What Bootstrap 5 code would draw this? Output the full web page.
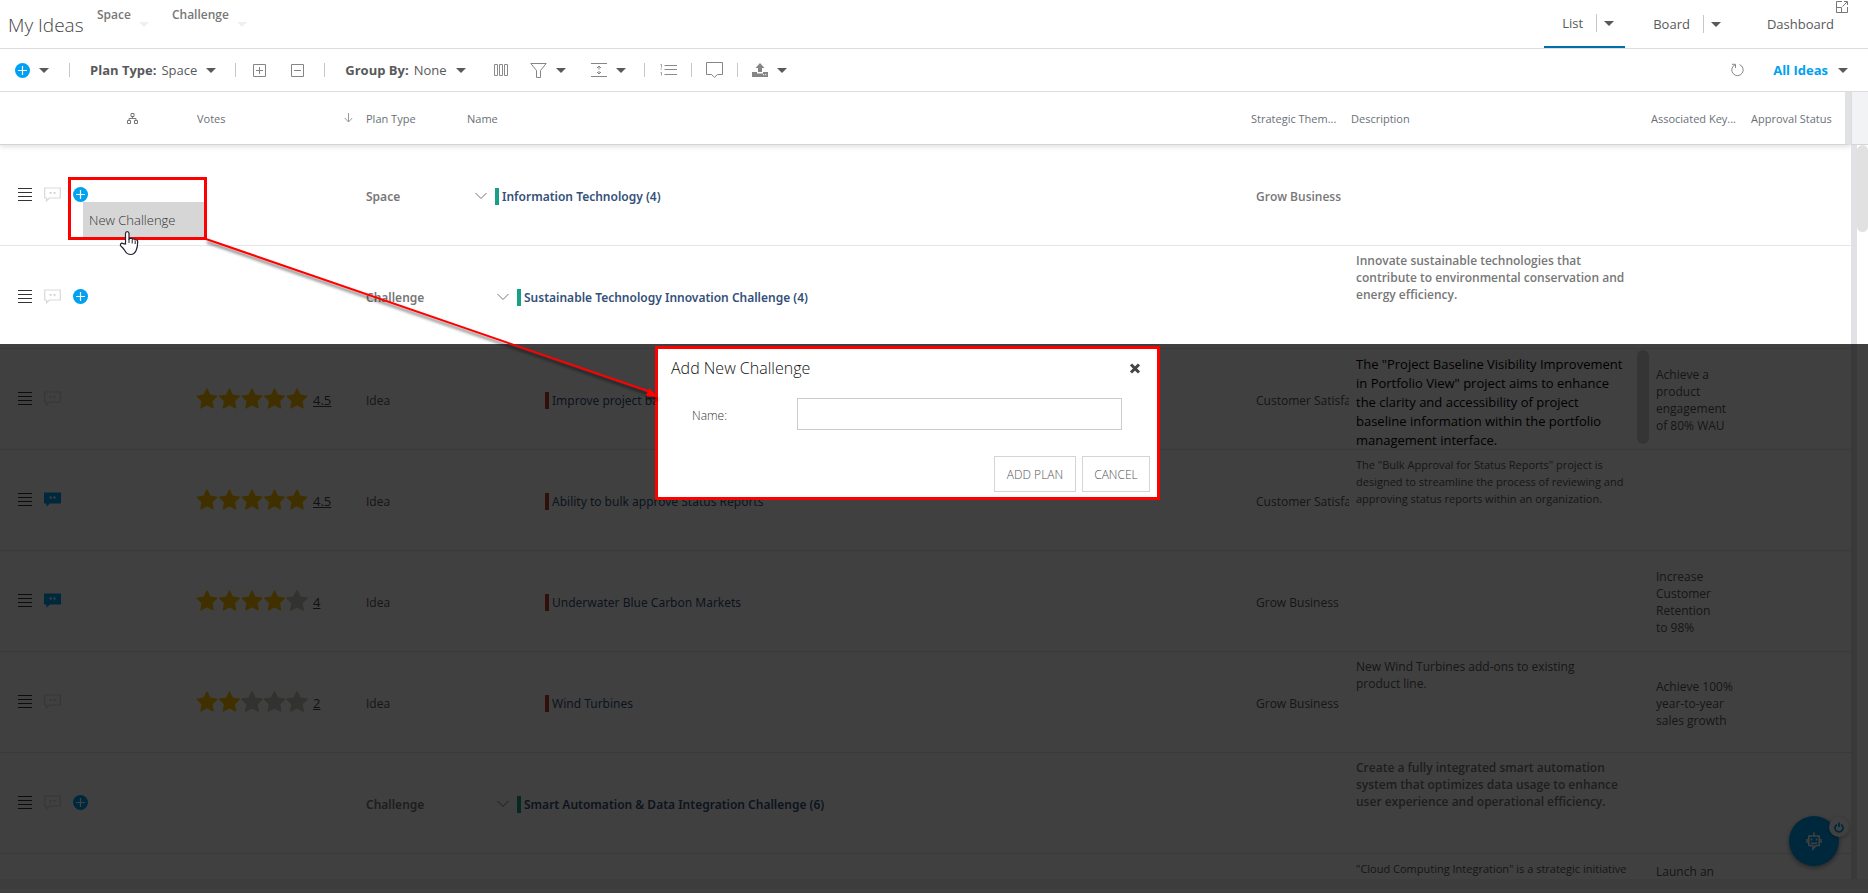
<!DOCTYPE html>
<html lang="en">
<head>
<meta charset="utf-8">
<meta name="viewport" content="width=device-width, initial-scale=1">
<title>My Ideas</title>
<link href="https://cdn.jsdelivr.net/npm/bootstrap@5.3.0/dist/css/bootstrap.min.css" rel="stylesheet">
<style>
  :root { --ui-font: "Open Sans", "Noto Sans", sans-serif; --grid-font: "Noto Sans", "Open Sans", sans-serif; --blue: #00a1f1; --ink: #58595b; --soft: #777; --line: #dcdde0; }
  body { font-family: var(--ui-font); font-size: 12px; line-height: 17px; color: var(--ink); background: #fff; }
  a { color: inherit; text-decoration: none; }
  svg { display: block; flex: none; }
  .page { height: 100vh; overflow: hidden; }
  .btn-plain { border: 0; background: none; padding: 0; color: inherit; display: flex; align-items: center; gap: 9px; white-space: nowrap; }
  .caret { width: 0; height: 0; border: 5px solid transparent; border-top-color: #58595b; border-bottom: 0; flex: none; }
  .caret-soft { border-top-color: #eeeff0; }
  .rule-v { width: 1px; height: 14px; background: #c8c8c8; flex: none; }

  .topbar { height: 49px; border-bottom: 1px solid var(--line); }
  .topbar h1 { font-size: 19px; line-height: 24px; font-weight: 300; margin: 0; padding: 13px 0 0 8px; color: #444; width: 97px; white-space: nowrap; }
  .level { font-weight: 600; color: var(--soft); padding: 6px 23px 0 0; align-items: flex-start; height: 28px; gap: 8px; }
  .level .caret { margin-top: 16px; }
  .tab-item { font-size: 13px; height: 48px; gap: 7px; }
  .tab-item .rule-v { height: 18px; margin-left: 6px; }
  .tab-list { padding: 0 11px 0 18px; border-bottom: 2px solid #0070ad; }
  .tab-board { padding: 0 0 0 28px; }
  .tab-dash { padding: 0 2px 0 46px; }
  .expand { margin: 1px 20px 0 0; }

  .toolbar-row { height: 43px; padding: 0 20px 0 15px; border-bottom: 1px solid var(--line); font-size: 13px; }
  .toolbar-row b { font-weight: 700; margin-right: -4px; }
  .toolbar-row .rule-v { margin: 0 14px; }
  .toolbar-row .rule-wide { margin: 0 17px 0 19px; }
  .toolbar-row .rule-first { margin: 0 20px; }
  .toolbar-row .rule-list { margin: 0 15px 0 18px; }
  .toolbar-row .m-icon { margin-left: 25px; }
  .toolbar-row .m-wide { margin-left: 28px; }
  .toolbar-row .m-tight { margin-left: 22px; }
  .toolbar-row .saved-view { color: var(--blue); margin-left: 29px; gap: 10px; }
  .saved-view b.view-name { margin: 0; }

  .grid-wrap { flex: 1 1 0; min-height: 0; }
  .idea-grid { width: 100%; table-layout: fixed; border-collapse: separate; border-spacing: 0; }
  .c-tools { width: 117px; } .c-tree { width: 78px; } .c-votes { width: 169px; } .c-type { width: 101px; } .c-theme, .c-key { width: 100px; } .c-desc { width: 300px; } .c-status { width: 102px; }
  .idea-grid th { height: 53px; padding: 0 0 0 2px; font-size: 11px; font-weight: 400; color: #6a7078; border-bottom: 1px solid #d4d5d8; vertical-align: middle; white-space: nowrap; overflow: hidden; }
  .idea-grid th:nth-child(2) { padding-left: 10px; }
  .idea-grid th:nth-child(3) svg { margin-right: 11px; }
  .idea-grid thead { box-shadow: 0 2px 5px rgba(0,0,0,.12); }
  .idea-grid th:last-child { border-right: 6px solid #e1e2e4; }
  .idea-grid td { height: 101px; padding: 2px 0 0 7px; border-bottom: 1px solid #e6e7e9; vertical-align: middle; overflow: hidden; color: var(--ink); }
  .idea-grid td:nth-child(3), .idea-grid td:nth-child(4) { padding-left: 2px; }
  .idea-grid td:first-child { padding: 0 0 2px 18px; }
  .idea-grid td:nth-child(7) { vertical-align: top; padding: 6px 8px 0 7px; }
  .idea-grid td:nth-child(8) { padding-right: 10px; }
  .idea-grid .tall-row td { height: 103px; }
  .idea-grid .tall-row td:nth-child(-n+5) { padding-bottom: 2px; }
  .idea-grid .level-row td { font-weight: 600; color: var(--soft); }
  .idea-grid .level-row td:nth-child(4), .idea-grid .level-row td:nth-child(5) { font-family: var(--grid-font); }
  .row-tools { display: flex; align-items: center; gap: 12px; }
  .plan-link { display: flex; align-items: center; white-space: nowrap; font-family: var(--grid-font); }
  .plan-link a { color: #34507a; }
  .stripe { width: 4px; height: 17px; background: #16a085; margin: 0 3px 0 8px; flex: none; }
  .stripe-red { background: #c0392b; margin: 0 3px 0 0; }
  .in-1 { padding-left: 3px; } .in-2 { padding-left: 25px; } .in-3 { padding-left: 73px; }
  .votes { display: flex; align-items: center; }
  .votes svg { margin: 0 0 3px -1px; }
  .votes a { text-decoration: underline; margin-left: 5px; font-size: 13px; color: #444; }
  .idea-grid td.desc-small { font-size: 11px; }
  .rich-text { font-size: 13px; line-height: 19px; color: #000; margin-right: -8px; display: flex; justify-content: space-between; height: 94px; }
  .rich-text .thumb { width: 12px; flex: none; border-radius: 6px; background: #d2d2d2; margin: -5px 0 5px; }
  .rich-text p { margin: 0; width: 276px; }
  .idea-grid td.key-top { vertical-align: top; padding-top: 9px; }

  .side { width: 17px; flex: none; }
  .side-head { height: 53px; background: #f2f3f5; border-left: 1px solid var(--line); border-bottom: 1px solid #d4d5d8; }
  .side-body { border-left: 6px solid #e1e2e6; }
  .side-body .thumb { height: 87px; border-radius: 6px; background: #e1e1e1; }
  .bottom-scroll { height: 14px; border-bottom: 4px solid #fff; background: #f1f1f1; flex: none; }

  .shade { position: absolute; inset: 344px 0 0 0; background: rgba(0,0,0,.75); }
  .assist { position: absolute; right: 29px; bottom: 27px; width: 50px; height: 50px; border-radius: 50%; background: var(--blue); border: 0; padding: 0; display: flex; align-items: center; justify-content: center; box-shadow: 0 2px 5px rgba(0,0,0,.4); }
  .assist .power { position: absolute; right: -10px; top: 1px; width: 20px; height: 20px; border-radius: 50%; background: #fff; display: flex; align-items: center; justify-content: center; box-shadow: 0 1px 4px rgba(0,0,0,.35); }

  .callout { position: absolute; left: 68px; top: 177px; width: 139px; height: 63px; border: 3px solid #f00; padding: 22px 0 0 12px; }
  .callout button { width: 100%; height: 35px; background: #d6d6d6; border: 0; text-align: left; padding: 2px 0 0 6px; font-size: 13px; font-weight: 300; color: #333; }
  .marks { position: absolute; left: 0; top: 0; pointer-events: none; }

  .dialog-box { position: absolute; left: 655px; top: 346px; width: 505px; height: 154px; border: 3px solid #f00; background: #fff; padding: 7px 7px 5px 13px; }
  .dialog-head { padding-right: 9px; }
  .dialog-box h2 { font-size: 16px; line-height: 24px; font-weight: 300; margin: 0; color: #111; }
  .dialog-field { margin: 18px 0 26px 21px; }
  .dialog-box label { width: 105px; padding-top: 2px; font-size: 12px; font-weight: 300; color: #333; }
  .dialog-box input { width: 325px; height: 32px; border: 1px solid #ccc; border-radius: 0; padding: 4px 8px; }
  .dialog-foot { gap: 6px; }
  .btn-flat { border: 1px solid #d4d4d4; background: #fff; width: 82px; height: 36px; padding: 0; font-size: 12px; font-weight: 300; color: #555; }
  .btn-cancel { width: 68px; }
</style>
<script src="https://cdn.jsdelivr.net/npm/bootstrap@5.3.0/dist/js/bootstrap.bundle.min.js"></script>
</head>
<body>
<svg width="0" height="0" class="position-absolute">
  <symbol id="plus" viewBox="0 0 15 15"><circle cx="7.500" cy="7.500" r="7.500" fill="#00a1f1"/><path d="M7.500 3v9M3 7.500h9" stroke="#fff" stroke-width="1.200"/></symbol>
  <symbol id="lines" viewBox="0 0 14 13"><path d="M0 .5h14M0 4.500h14M0 8.500h14M0 12.500h14" stroke="#333" /></symbol>
  <symbol id="note" viewBox="0 0 17 15"><path d="M.7 1h15.600v10H5.500L2.500 13.800V11H.7z" fill="none" stroke="#d9d9d9" stroke-width="1.200"/><path d="M5.500 5h2v1.500l-1 1v-1h-1zM9.500 5h2v1.500l-1 1v-1h-1z" fill="#d0d0d0"/></symbol>
  <symbol id="note-on" viewBox="0 0 17 15"><path d="M0 .5h17v11H6L2.500 14.800V11.500H0z" fill="#00a1f1"/><path d="M5.500 4.500h2.200v1.700l-1 1.300v-1.300H5.500zM9.300 4.500h2.200v1.700l-1 1.300v-1.300H9.300z" fill="#fff"/></symbol>
  <symbol id="chev" viewBox="0 0 12 8"><path d="M.5 1 6 6.500 11.500 1" fill="none" stroke="#777"/></symbol>
  <symbol id="star" viewBox="0 0 22 21"><path d="M11 1l3 6.300 6.800.9-5 4.800 1.300 6.900L11 16.600 4.900 19.900 6.200 13 1.200 8.200 8 7.300z" stroke="currentColor" stroke-width="1.400" stroke-linejoin="round" fill="currentColor"/></symbol>
  <symbol id="s5" viewBox="0 0 112 21"><g color="#ffc000"><use href="#star" width="22" height="21"/><use href="#star" x="22.500" width="22" height="21"/><use href="#star" x="45" width="22" height="21"/><use href="#star" x="67.500" width="22" height="21"/><use href="#star" x="90" width="22" height="21"/></g></symbol>
</svg>

<div class="page d-flex flex-column position-relative">
  <header class="topbar d-flex flex-shrink-0">
    <h1>My Ideas</h1>
    <button class="btn-plain level">Space<span class="caret caret-soft"></span></button>
    <button class="btn-plain level">Challenge<span class="caret caret-soft"></span></button>
    <nav class="ms-auto d-flex">
      <div class="tab-item tab-list d-flex align-items-center"><a href="#">List</a><span class="rule-v"></span><button class="btn-plain" aria-label="List options"><span class="caret"></span></button></div>
      <div class="tab-item tab-board d-flex align-items-center"><a href="#">Board</a><span class="rule-v"></span><button class="btn-plain" aria-label="Board options"><span class="caret"></span></button></div>
      <div class="tab-item tab-dash d-flex align-items-center"><a href="#">Dashboard</a></div>
      <button class="btn-plain expand align-self-start" aria-label="Expand"><svg width="12" height="12" viewBox="0 0 12 12" fill="none" stroke="#777"><path d="M6 .5H.5v11h11V6M5.500 11V6.500H1M8 .5h3.500V4M11 1 6.500 5.500"/></svg></button>
    </nav>
  </header>

  <div class="toolbar-row d-flex align-items-center flex-shrink-0">
    <button class="btn-plain" aria-label="Add"><svg width="15" height="15"><use href="#plus"/></svg><span class="caret"></span></button>
    <span class="rule-v rule-first"></span>
    <button class="btn-plain"><b>Plan Type:</b>Space<span class="caret"></span></button>
    <span class="rule-v rule-wide"></span>
    <button class="btn-plain" aria-label="Expand all"><svg width="13" height="13" viewBox="0 0 13 13" fill="none" stroke="#858585"><path d="M.5.5h12v12H.5zM6.500 3v7M3 6.500h7"/></svg></button>
    <button class="btn-plain m-icon" aria-label="Collapse all"><svg width="13" height="13" viewBox="0 0 13 13" fill="none" stroke="#858585"><path d="M.5.5h12v12H.5zM3 6.500h7"/></svg></button>
    <span class="rule-v rule-first"></span>
    <button class="btn-plain"><b>Group By:</b>None<span class="caret"></span></button>
    <button class="btn-plain m-wide" aria-label="Columns"><svg width="14" height="12" viewBox="0 0 14 12" fill="none" stroke="#8a8a8a"><path d="M.5.5h3v11h-3zM5.500.5h3v11h-3zM10.500.5h3v11h-3z"/></svg></button>
    <button class="btn-plain m-tight" aria-label="Filter"><svg width="17" height="15" viewBox="0 0 17 15" fill="none" stroke="#858585"><path d="M.8.5h15.400L10.500 7.500v7h-4v-7z"/></svg><span class="caret"></span></button>
    <button class="btn-plain m-icon" aria-label="Row height"><svg width="16" height="14" viewBox="0 0 16 14" fill="none" stroke="#858585"><path d="M0 .5h16M0 13.500h16M8 3v3.500M8 8v3M6 5l2-2 2 2M6 9l2 2 2-2"/></svg><span class="caret"></span></button>
    <span class="rule-v rule-list"></span>
    <button class="btn-plain" aria-label="Numbered list"><svg width="17" height="12" viewBox="0 0 17 12" stroke="#8a8a8a" fill="none"><path d="M4.500 1.500H17M4.500 5.500H17M4.500 10.500H17"/><path d="M.5.500h1v3M.5 5h1.500M.5 8.500h1v3" stroke-width=".8"/></svg></button>
    <span class="rule-v"></span>
    <button class="btn-plain" aria-label="Comments"><svg width="17" height="16" viewBox="0 0 17 16" stroke="#858585" fill="none"><path d="M.5.500h16v12h-5l-3 2.800-3-2.800h-5z"/></svg></button>
    <span class="rule-v"></span>
    <button class="btn-plain" aria-label="Export"><svg width="16" height="14" viewBox="0 0 16 14" fill="#858585"><path d="M8 0l4.500 5H10v4H6V5H3.500zM0 9h5v1.500h6V9h5v5H0z"/><path d="M11 11.700h1.200M13.200 11.700h1.200" stroke="#fff"/></svg><span class="caret"></span></button>
    <button class="btn-plain ms-auto" aria-label="Refresh"><svg width="13" height="14" viewBox="0 0 13 14" fill="none" stroke="#888"><path d="M8.500 1.600A5.700 5.700 0 1 1 4 1.800M1 1.300h3.500V5"/></svg></button>
    <button class="btn-plain saved-view"><b class="view-name">All Ideas</b><span class="caret"></span></button>
  </div>

  <main class="grid-wrap d-flex overflow-hidden">
    <div class="flex-grow-1 overflow-hidden">
    <table class="idea-grid">
      <colgroup><col class="c-tools"><col class="c-tree"><col class="c-votes"><col class="c-type"><col><col class="c-theme"><col class="c-desc"><col class="c-key"><col class="c-status"></colgroup>
      <thead><tr>
        <th></th>
        <th><svg width="11" height="11" viewBox="0 0 11 11" fill="none" stroke="#777"><path d="M4 .5h3v3H4zM.5 7.500h3v3h-3zM7.500 7.500h3v3h-3zM5.500 3.500v2M2 7.500v-2h7v2"/></svg></th>
        <th><div class="d-flex align-items-center justify-content-between">Votes<svg width="9" height="10" viewBox="0 0 9 10" fill="none" stroke="#999"><path d="M4.500 0v9M.8 5l3.700 4 3.700-4"/></svg></div></th>
        <th>Plan Type</th><th>Name</th><th>Strategic Them...</th><th>Description</th><th>Associated Key...</th><th>Approval Status</th>
      </tr></thead>
      <tbody>
        <tr class="level-row">
          <td><div class="row-tools"><svg width="14" height="13"><use href="#lines"/></svg><svg width="17" height="15"><use href="#note"/></svg><svg width="15" height="15"><use href="#plus"/></svg></div></td>
          <td></td><td></td><td>Space</td>
          <td><div class="plan-link in-1"><svg width="12" height="8"><use href="#chev"/></svg><span class="stripe"></span><a href="#">Information Technology (4)</a></div></td>
          <td>Grow Business</td><td></td><td></td><td></td>
        </tr>
        <tr class="level-row tall-row">
          <td><div class="row-tools"><svg width="14" height="13"><use href="#lines"/></svg><svg width="17" height="15"><use href="#note"/></svg><svg width="15" height="15"><use href="#plus"/></svg></div></td>
          <td></td><td></td><td>Challenge</td>
          <td><div class="plan-link in-2"><svg width="12" height="8"><use href="#chev"/></svg><span class="stripe"></span><a href="#">Sustainable Technology Innovation Challenge (4)</a></div></td>
          <td></td><td>Innovate sustainable technologies that contribute to environmental conservation and energy efficiency.</td><td></td><td></td>
        </tr>
        <tr>
          <td><div class="row-tools"><svg width="14" height="13"><use href="#lines"/></svg><svg width="17" height="15"><use href="#note"/></svg></div></td>
          <td></td><td><div class="votes"><svg width="112" height="21"><use href="#s5"/></svg><a href="#">4.5</a></div></td><td>Idea</td>
          <td><div class="plan-link in-3"><span class="stripe stripe-red"></span><a href="#">Improve project baseline</a></div></td>
          <td class="text-nowrap">Customer Satisfaction</td>
          <td><div class="rich-text"><p>The "Project Baseline Visibility Improvement in Portfolio View" project aims to enhance the clarity and accessibility of project baseline information within the portfolio management interface.</p><span class="thumb"></span></div></td>
          <td>Achieve a product engagement of 80% WAU</td><td></td>
        </tr>
        <tr>
          <td><div class="row-tools"><svg width="14" height="13"><use href="#lines"/></svg><svg width="17" height="15"><use href="#note-on"/></svg></div></td>
          <td></td><td><div class="votes"><svg width="112" height="21"><use href="#s5"/></svg><a href="#">4.5</a></div></td><td>Idea</td>
          <td><div class="plan-link in-3"><span class="stripe stripe-red"></span><a href="#">Ability to bulk approve Status Reports</a></div></td>
          <td class="text-nowrap">Customer Satisfaction</td>
          <td class="desc-small">The "Bulk Approval for Status Reports" project is designed to streamline the process of reviewing and approving status reports within an organization.</td><td></td><td></td>
        </tr>
        <tr>
          <td><div class="row-tools"><svg width="14" height="13"><use href="#lines"/></svg><svg width="17" height="15"><use href="#note-on"/></svg></div></td>
          <td></td><td><div class="votes"><svg width="112" height="21"><use href="#s5"/><use href="#star" x="90" width="22" height="21" color="#c8c8c8"/></svg><a href="#">4</a></div></td><td>Idea</td>
          <td><div class="plan-link in-3"><span class="stripe stripe-red"></span><a href="#">Underwater Blue Carbon Markets</a></div></td>
          <td>Grow Business</td><td></td><td>Increase Customer Retention<br>to 98%</td><td></td>
        </tr>
        <tr>
          <td><div class="row-tools"><svg width="14" height="13"><use href="#lines"/></svg><svg width="17" height="15"><use href="#note"/></svg></div></td>
          <td></td><td><div class="votes"><svg width="112" height="21"><use href="#s5"/><g color="#c8c8c8"><use href="#star" x="45" width="22" height="21"/><use href="#star" x="67.500" width="22" height="21"/><use href="#star" x="90" width="22" height="21"/></g></svg><a href="#">2</a></div></td><td>Idea</td>
          <td><div class="plan-link in-3"><span class="stripe stripe-red"></span><a href="#">Wind Turbines</a></div></td>
          <td>Grow Business</td><td>New Wind Turbines add-ons to existing<br>product line.</td><td>Achieve 100% year-to-year sales growth</td><td></td>
        </tr>
        <tr class="level-row">
          <td><div class="row-tools"><svg width="14" height="13"><use href="#lines"/></svg><svg width="17" height="15"><use href="#note"/></svg><svg width="15" height="15"><use href="#plus"/></svg></div></td>
          <td></td><td></td><td>Challenge</td>
          <td><div class="plan-link in-2"><svg width="12" height="8"><use href="#chev"/></svg><span class="stripe"></span><a href="#">Smart Automation &amp; Data Integration Challenge (6)</a></div></td>
          <td></td><td>Create a fully integrated smart automation system that optimizes data usage to enhance user experience and operational efficiency.</td><td></td><td></td>
        </tr>
        <tr>
          <td></td><td></td><td></td><td></td><td></td><td></td>
          <td class="desc-small text-nowrap">"Cloud Computing Integration" is a strategic initiative</td><td class="key-top">Launch an</td><td></td>
        </tr>
      </tbody>
    </table>
    </div>
    <div class="side d-flex flex-column"><div class="side-head"></div><div class="side-body flex-grow-1"><div class="thumb"></div></div></div>
  </main>
  <div class="bottom-scroll"></div>

  <button class="assist" aria-label="Assistant"><svg width="16" height="20" viewBox="0 0 16 20" fill="none" stroke="#fff" stroke-width="1.500"><path d="M2.800 5h10.400v9.500H10L7 18v-3.500H2.800zM8 5V1.500M1 8v4M15 8v4"/><path d="M5.500 7.500v2M10.500 7.500v2M5 11.800q3 1.400 6 0"/></svg>
    <span class="power"><svg width="10" height="11" viewBox="0 0 10 11" fill="none" stroke="#00a1f1" stroke-width="1.800"><path d="M3 2.500a4 4 0 1 0 4 0M5 .5v4.500"/></svg></span></button>

  <div class="shade"></div>

  <div class="callout"><button>New Challenge</button></div>

  <div class="dialog-box" role="dialog" aria-label="Add New Challenge">
    <div class="dialog-head d-flex justify-content-between align-items-center"><h2>Add New Challenge</h2><button class="btn-plain" aria-label="Close"><svg width="12" height="11" viewBox="0 0 12 11"><path d="M2 1.500 10 9.500M10 1.500 2 9.500" stroke="#444" stroke-width="3"/></svg></button></div>
    <div class="dialog-field d-flex align-items-center"><label for="plan-name">Name:</label><input id="plan-name" type="text"></div>
    <div class="dialog-foot d-flex justify-content-end"><button class="btn-flat">ADD PLAN</button><button class="btn-flat btn-cancel">CANCEL</button></div>
  </div>

  <svg class="marks" width="680" height="420" viewBox="0 0 680 420">
    <defs><filter id="sh" x="-5%" y="-5%" width="110%" height="115%"><feDropShadow dx="1" dy="3" stdDeviation="1.500" flood-color="#000" flood-opacity=".6"/></filter></defs>
    <g filter="url(#sh)"><path d="M206 239 648 391" stroke="#f00" stroke-width="2"/><path d="M649 388l9 9-12-1z" fill="#f00"/></g>
    <path d="M125.500 244v-10.500c0-2.600 3.500-2.600 3.500 0v5.500l1-.5c1.200-.5 2.200 0 2.500.8 1-.6 2.300-.3 2.600.6 1.200-.4 2.600.1 2.600 1.700 0 5-.3 6.400-1.600 8.900-1.300 2.800-2.700 4-5.400 4-2.500 0-4.200-1-5.600-3.500-1-1.800-2.200-3.300-3.800-4.500-2.200-1.800-.2-4.200 2-2.800z" fill="#fff" stroke="#223" stroke-width="1.200"/>
    <path d="M129 239v4M132.200 240v3.500M135.200 241v3" stroke="#223" fill="none"/>
  </svg>
</div>
</body>
</html>
